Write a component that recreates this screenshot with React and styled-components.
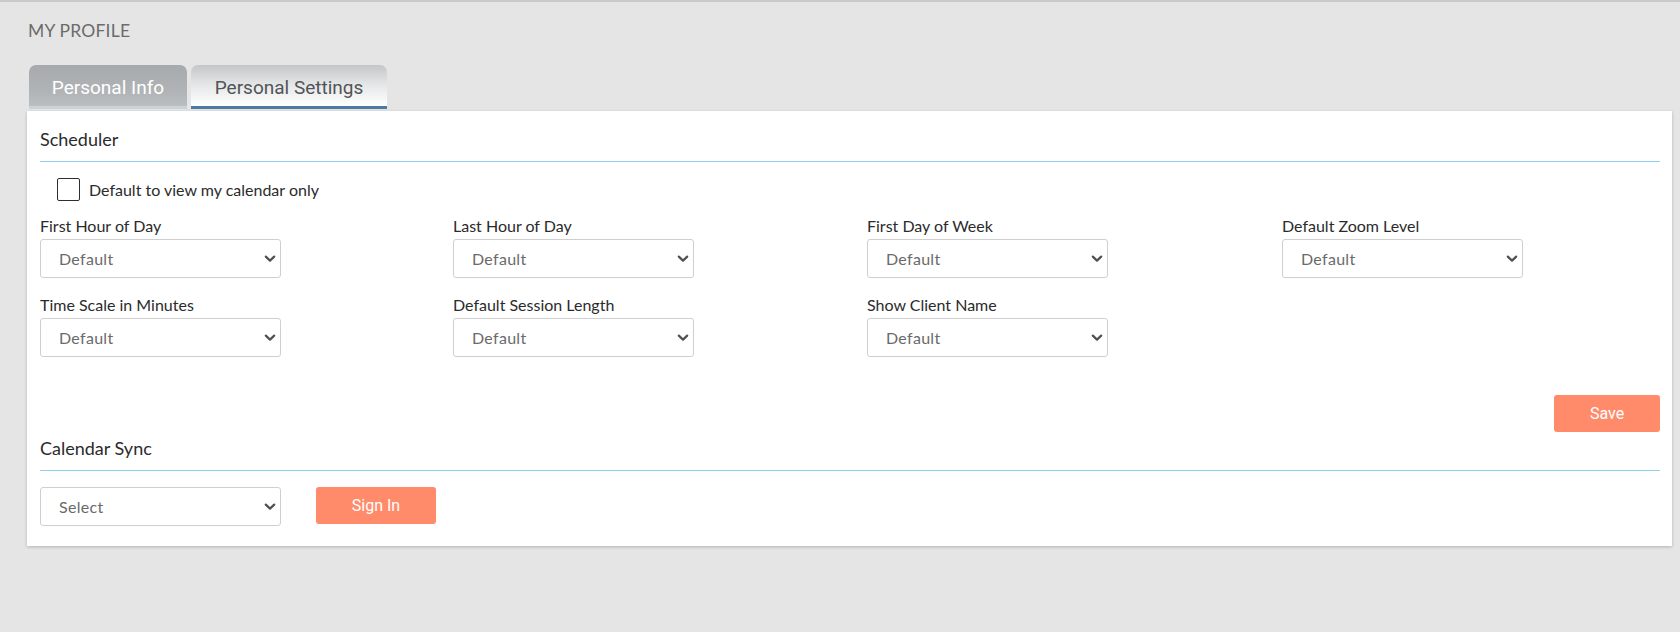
import React from 'react';
import styled, { createGlobalStyle } from 'styled-components';

const GlobalStyle = createGlobalStyle`
  html, body {
    margin: 0;
    padding: 0;
    background: #e5e5e5;
  }
  body {
    font-family: Lato, "Noto Sans", sans-serif;
  }
`;

const SchedulerFields = [
  { label: 'First Hour of Day', value: 'Default' },
  { label: 'Last Hour of Day', value: 'Default' },
  { label: 'First Day of Week', value: 'Default' },
  { label: 'Default Zoom Level', value: 'Default' },
  { label: 'Time Scale in Minutes', value: 'Default' },
  { label: 'Default Session Length', value: 'Default' },
  { label: 'Show Client Name', value: 'Default' },
];

function Chevron() {
  return (
    <ChevronIcon width="12" height="8" viewBox="0 0 12 8">
      <path
        d="M1.8 1.6 L6 5.6 L10.2 1.6"
        fill="none"
        stroke="#505050"
        strokeWidth="2.2"
        strokeLinecap="round"
        strokeLinejoin="round"
      />
    </ChevronIcon>
  );
}

function SelectBox({ value }) {
  return (
    <SelectWrap>
      <Select defaultValue={value}>
        <option>{value}</option>
      </Select>
      <Chevron />
    </SelectWrap>
  );
}

function App() {
  const fieldItems = SchedulerFields.map((field) => (
    <Field key={field.label}>
      <FieldLabel>{field.label}</FieldLabel>
      <SelectBox value={field.value} />
    </Field>
  ));

  return (
    <Page>
      <GlobalStyle />
      <PageTitle>MY PROFILE</PageTitle>
      <TabBar>
        <Tab>Personal Info</Tab>
        <Tab active>Personal Settings</Tab>
      </TabBar>
      <Panel>
        <SectionTitle>Scheduler</SectionTitle>
        <CheckRow>
          <CheckBox />
          <CheckLabel>Default to view my calendar only</CheckLabel>
        </CheckRow>
        <FieldGrid>{fieldItems}</FieldGrid>
        <SaveRow>
          <ActionButton wide>Save</ActionButton>
        </SaveRow>
        <SectionTitle>Calendar Sync</SectionTitle>
        <SyncRow>
          <SelectBox value="Select" />
          <ActionButton>Sign In</ActionButton>
        </SyncRow>
      </Panel>
    </Page>
  );
}

export default App;

const Page = styled.div`
  min-height: 632px;
  box-sizing: border-box;
  border-top: 2px solid #c9c9c9;
  padding: 18px 8px 0 27px;
`;

const PageTitle = styled.div`
  font-family: Lato, sans-serif;
  font-size: 17.5px;
  line-height: 22px;
  color: #6b6b6b;
  letter-spacing: 0.2px;
  padding-left: 1px;
`;

const TabBar = styled.div`
  display: flex;
  gap: 4px;
  margin: 23px 0 2px 2px;
`;

const Tab = styled.div`
  box-sizing: border-box;
  height: 44px;
  width: ${(p) => (p.active ? '196px' : '158px')};
  display: flex;
  align-items: center;
  justify-content: center;
  padding-top: 3px;
  border-radius: 7px 7px 0 0;
  font-family: Roboto, sans-serif;
  font-size: 19px;
  color: ${(p) => (p.active ? '#505458' : '#ffffff')};
  background: ${(p) =>
    p.active
      ? 'linear-gradient(to bottom, #c4c6c8 0%, #e6e7e8 50%, #ffffff 100%)'
      : 'linear-gradient(to bottom, #a6a9ad 0%, #b0b3b6 60%, #bbbec1 100%)'};
  border-bottom: 3px solid ${(p) => (p.active ? '#4a7ba5' : '#c9d3da')};
`;

const Panel = styled.div`
  width: 1645px;
  box-sizing: border-box;
  background: #ffffff;
  padding: 16px 12px 20px 13px;
  box-shadow: 0 1px 3px rgba(0, 0, 0, 0.22);
`;

const SectionTitle = styled.div`
  font-family: Lato, sans-serif;
  font-size: 18px;
  line-height: 24px;
  color: #2b2b2b;
  padding-bottom: 10px;
  border-bottom: 1px solid #8fd1ee;
`;

const CheckRow = styled.label`
  display: flex;
  align-items: center;
  gap: 9px;
  margin: 16px 0 0 17px;
`;

const CheckBox = styled.span`
  display: block;
  box-sizing: border-box;
  width: 23px;
  height: 23px;
  border: 1.5px solid #2e2e2e;
  border-radius: 2px;
  background: #fff;
`;

const CheckLabel = styled.span`
  font-size: 16px;
  color: #2b2b2b;
`;

const FieldGrid = styled.div`
  display: grid;
  grid-template-columns: 413px 414px 415px 1fr;
  row-gap: 17px;
  margin-top: 15px;
`;

const Field = styled.div`
  display: flex;
  flex-direction: column;
  gap: 3px;
`;

const FieldLabel = styled.div`
  font-size: 16px;
  line-height: 20px;
  color: #2b2b2b;
`;

const SelectWrap = styled.div`
  position: relative;
  width: 241px;
  height: 39px;
`;

const Select = styled.select`
  appearance: none;
  -webkit-appearance: none;
  width: 100%;
  height: 100%;
  box-sizing: border-box;
  border: 1px solid #cfcfcf;
  border-radius: 3px;
  background: #ffffff;
  padding: 0 30px 0 18px;
  font-family: Lato, sans-serif;
  font-size: 16px;
  letter-spacing: 0.3px;
  color: #6a6a6a;
  outline: none;
`;

const ChevronIcon = styled.svg`
  position: absolute;
  right: 5px;
  top: 16px;
  pointer-events: none;
`;

const SaveRow = styled.div`
  display: flex;
  justify-content: flex-end;
  margin-top: 38px;
  margin-bottom: 4px;
`;

const ActionButton = styled.button`
  width: ${(p) => (p.wide ? '106px' : '120px')};
  height: 37px;
  border: none;
  border-radius: 3px;
  background: #ff8b6b;
  color: #ffffff;
  font-family: Roboto, sans-serif;
  font-size: 16px;
  cursor: pointer;
`;

const SyncRow = styled.div`
  display: flex;
  align-items: flex-start;
  gap: 35px;
  margin-top: 16px;
`;
